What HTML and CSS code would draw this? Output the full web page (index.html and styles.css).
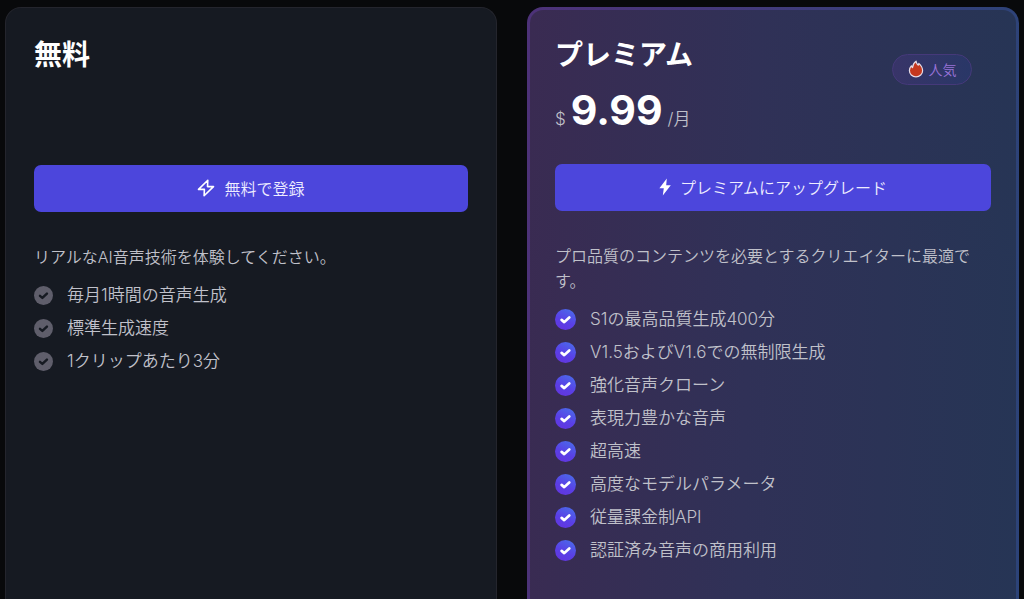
FILE: index.html
```html
<!DOCTYPE html>
<html lang="ja">
<head>
<meta charset="UTF-8">
<meta name="viewport" content="width=device-width, initial-scale=1.0">
<title>料金プラン</title>
<link rel="stylesheet" href="styles.css">
</head>

<body>

<svg class="sprite" aria-hidden="true">
<defs>
<linearGradient id="checkFill" x1="0.8" y1="0" x2="0.3" y2="1">
<stop offset="0" stop-color="#4a6bea"/>
<stop offset="0.6" stop-color="#5a3fe6"/>
<stop offset="1" stop-color="#6236e0"/>
</linearGradient>
</defs>
<symbol id="check" viewBox="0 0 20 20">
<circle cx="10" cy="10" r="10"/>
<path d="M6.3 10.4 L8.8 12.5 L13.6 8" fill="none" stroke="currentColor" stroke-width="2.6" stroke-linecap="round" stroke-linejoin="round"/>
</symbol>
</svg>

<main class="plans">

<section class="card">
<div class="head">
<h2>無料</h2>
</div>
<button class="btn" type="button">
<svg class="bolt" viewBox="0 0 18 18"><path d="M10.8 1.3 L1.5 10.4 H7.4 L7.1 16.7 L16.5 7.6 H10.5 Z" fill="none" stroke="#fff" stroke-width="1.6" stroke-linejoin="round"/></svg>
無料で登録
</button>
<p class="desc">リアルなAI音声技術を体験してください。</p>
<ul class="features">
<li><svg class="check"><use href="#check"/></svg>毎月1時間の音声生成</li>
<li><svg class="check"><use href="#check"/></svg>標準生成速度</li>
<li><svg class="check"><use href="#check"/></svg>1クリップあたり3分</li>
</ul>
</section>

<section class="card premium">
<div class="head">
<div>
<h2>プレミアム</h2>
<p class="price"><span>$</span><strong>9.99</strong><span>/月</span></p>
</div>
<span class="badge">
<svg class="flame" viewBox="0 0 16 18"><path d="M8.1 1.2 C8.3 3.1 9.2 4.3 10.3 5.2 C10.6 4.6 10.8 4.1 10.8 3.4 C12.9 5.3 14.6 7.7 14.6 10.7 C14.6 14.2 11.7 16.8 8 16.8 C4.2 16.8 1.4 14.1 1.4 10.5 C1.4 8.5 2.2 7 3.3 5.8 C3.6 6.6 3.9 7.1 4.5 7.6 C4.8 4.8 6 2.6 8.1 1.2 Z" fill="#c5381f" stroke="#e6dbe6" stroke-width="1.2" stroke-linejoin="round"/></svg>
人気
</span>
</div>
<button class="btn" type="button">
<svg class="bolt solid" viewBox="0 0 12 18"><path d="M7.8 0.5 L0.4 10.2 H4.8 L3.8 17.5 L11.8 7.2 H7.2 Z" fill="#fff"/></svg>
プレミアムにアップグレード
</button>
<p class="desc">プロ品質のコンテンツを必要とするクリエイターに最適です。</p>
<ul class="features">
<li><svg class="check"><use href="#check"/></svg>S1の最高品質生成400分</li>
<li><svg class="check"><use href="#check"/></svg>V1.5およびV1.6での無制限生成</li>
<li><svg class="check"><use href="#check"/></svg>強化音声クローン</li>
<li><svg class="check"><use href="#check"/></svg>表現力豊かな音声</li>
<li><svg class="check"><use href="#check"/></svg>超高速</li>
<li><svg class="check"><use href="#check"/></svg>高度なモデルパラメータ</li>
<li><svg class="check"><use href="#check"/></svg>従量課金制API</li>
<li><svg class="check"><use href="#check"/></svg>認証済み音声の商用利用</li>
</ul>
</section>

</main>

</body>
</html>
```
FILE: styles.css
```css
*{box-sizing:border-box}
body{margin:0;background:#08090b;color:#c0c1ca;font-family:Inter,"Noto Sans CJK JP",sans-serif;font-size:17px;font-weight:350}
h2,p,ul{margin:0;padding:0}

.sprite{position:absolute;width:0;height:0}

.plans{display:grid;grid-template-columns:1fr 1fr;gap:30px;min-height:100vh;padding:7px 5px 0}
.card{padding:28px;background:#161a22;border:1px solid #24252d;border-bottom:0;border-radius:16px 16px 0 0}
.premium{padding:26px 25px;border:3px solid transparent;border-bottom:0;
background:linear-gradient(92deg,#3a2b52,#303157 45%,#263555) padding-box,
linear-gradient(92deg,#4d3278,#433b7c 45%,#2c4378) border-box}

.head{display:flex;justify-content:space-between;height:129px}
.premium .head{height:128px}
h2{color:#fff;font-size:28px;font-weight:700;line-height:38px}

.price{display:flex;align-items:baseline;gap:5px;line-height:48px;margin-top:12px}
.price strong{color:#fff;font-size:41px;font-weight:700}

.badge{display:flex;align-items:center;justify-content:center;gap:5px;width:80px;height:31px;margin:18px 19px 0 0;padding-bottom:1px;
border:1px solid #45397a;border-radius:16px;background:linear-gradient(90deg,#383468,#293767);color:#9873d8;font-size:14px}
.flame{width:16px;height:18px}

.btn{display:flex;align-items:center;justify-content:center;gap:9px;width:100%;height:47px;padding:0 0 2px;
border:0;border-radius:7px;background:#4c46dc;color:#eeedff;font:inherit;font-size:16px;cursor:pointer}
.btn:hover{background:#423cc8}
.bolt{width:18px;height:18px}
.solid{width:12px}

.desc{margin:33px 0 9px;font-size:16px;line-height:25px}
.features{list-style:none}
.features li{display:flex;gap:14px;height:33px;line-height:32px}
.check{width:19px;height:19px;margin-top:7px;fill:#5f5e6b;color:#161a22}
.premium .check{width:21px;height:21px;margin-top:6px;fill:url(#checkFill);color:#fff}
```
